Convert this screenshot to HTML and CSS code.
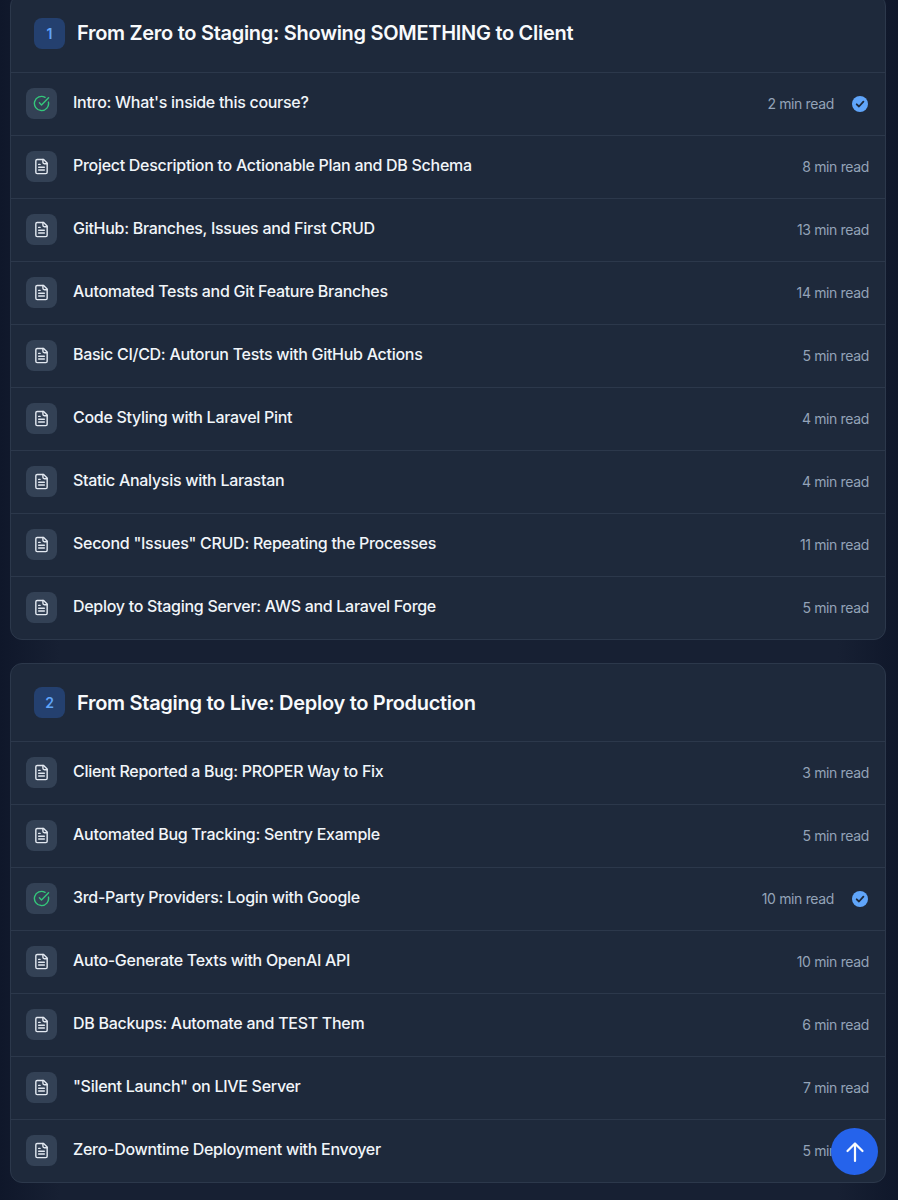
FILE: index.html
```html
<!DOCTYPE html>
<html lang="en">
<head>
<meta charset="utf-8">
<title>Course</title>
<link rel="stylesheet" href="styles.css">
</head>
<body>
<svg class="defs" width="0" height="0" aria-hidden="true">
  <symbol id="doc" viewBox="0 0 24 24" fill="none" stroke="currentColor" stroke-width="2" stroke-linecap="round" stroke-linejoin="round">
    <path d="M15 2H6a2 2 0 0 0-2 2v16a2 2 0 0 0 2 2h12a2 2 0 0 0 2-2V7Z"/>
    <path d="M14 2v4a2 2 0 0 0 2 2h4"/>
    <path d="M10 9H8M16 13H8M16 17H8"/>
  </symbol>
  <symbol id="done" viewBox="0 0 24 24" fill="none" stroke="currentColor" stroke-width="2" stroke-linecap="round" stroke-linejoin="round">
    <path d="M21.8 10A10 10 0 1 1 17 3.34"/>
    <path d="m9 11 3 3L22 4"/>
  </symbol>
  <symbol id="badge" viewBox="0 0 16 16">
    <circle cx="8" cy="8" r="8" fill="#60a5fa"/>
    <path d="M4.7 8.3 7 10.5l4.4-4.8" fill="none" stroke="#1e293b" stroke-width="1.8" stroke-linecap="round" stroke-linejoin="round"/>
  </symbol>
</svg>
<main class="page">
  <section class="card">
    <header class="card-head"><span class="num">1</span><h2>From Zero to Staging: Showing SOMETHING to Client</h2></header>
    <div class="row"><span class="ico ok"><svg><use href="#done"/></svg></span><span class="name">Intro: What's inside this course?</span><span class="time">2 min read</span><svg class="tick"><use href="#badge"/></svg></div>
    <div class="row"><span class="ico"><svg><use href="#doc"/></svg></span><span class="name">Project Description to Actionable Plan and DB Schema</span><span class="time">8 min read</span></div>
    <div class="row"><span class="ico"><svg><use href="#doc"/></svg></span><span class="name">GitHub: Branches, Issues and First CRUD</span><span class="time">13 min read</span></div>
    <div class="row"><span class="ico"><svg><use href="#doc"/></svg></span><span class="name">Automated Tests and Git Feature Branches</span><span class="time">14 min read</span></div>
    <div class="row"><span class="ico"><svg><use href="#doc"/></svg></span><span class="name">Basic CI/CD: Autorun Tests with GitHub Actions</span><span class="time">5 min read</span></div>
    <div class="row"><span class="ico"><svg><use href="#doc"/></svg></span><span class="name">Code Styling with Laravel Pint</span><span class="time">4 min read</span></div>
    <div class="row"><span class="ico"><svg><use href="#doc"/></svg></span><span class="name">Static Analysis with Larastan</span><span class="time">4 min read</span></div>
    <div class="row"><span class="ico"><svg><use href="#doc"/></svg></span><span class="name">Second "Issues" CRUD: Repeating the Processes</span><span class="time">11 min read</span></div>
    <div class="row"><span class="ico"><svg><use href="#doc"/></svg></span><span class="name">Deploy to Staging Server: AWS and Laravel Forge</span><span class="time">5 min read</span></div>
  </section>
  <section class="card">
    <header class="card-head"><span class="num">2</span><h2>From Staging to Live: Deploy to Production</h2></header>
    <div class="row"><span class="ico"><svg><use href="#doc"/></svg></span><span class="name">Client Reported a Bug: PROPER Way to Fix</span><span class="time">3 min read</span></div>
    <div class="row"><span class="ico"><svg><use href="#doc"/></svg></span><span class="name">Automated Bug Tracking: Sentry Example</span><span class="time">5 min read</span></div>
    <div class="row"><span class="ico ok"><svg><use href="#done"/></svg></span><span class="name">3rd-Party Providers: Login with Google</span><span class="time">10 min read</span><svg class="tick"><use href="#badge"/></svg></div>
    <div class="row"><span class="ico"><svg><use href="#doc"/></svg></span><span class="name">Auto-Generate Texts with OpenAI API</span><span class="time">10 min read</span></div>
    <div class="row"><span class="ico"><svg><use href="#doc"/></svg></span><span class="name">DB Backups: Automate and TEST Them</span><span class="time">6 min read</span></div>
    <div class="row"><span class="ico"><svg><use href="#doc"/></svg></span><span class="name">"Silent Launch" on LIVE Server</span><span class="time">7 min read</span></div>
    <div class="row"><span class="ico"><svg><use href="#doc"/></svg></span><span class="name">Zero-Downtime Deployment with Envoyer</span><span class="time">5 min read</span></div>
  </section>
</main>
<a class="fab" href="#top" aria-label="Back to top">
  <svg viewBox="0 0 24 24" fill="none" stroke="currentColor" stroke-width="2.2" stroke-linecap="round" stroke-linejoin="round"><path d="M12 21V3.5M4.5 11 12 3.5l7.5 7.5"/></svg>
</a>
</body>
</html>
```
FILE: styles.css
```css
* { box-sizing: border-box; }
html, body { margin: 0; height: 1200px; overflow: hidden; }
body {
  background: linear-gradient(90deg, #0f172a 0, #172033 60px, #172033 838px, #0f172a 100%);
  font-family: Inter, "Liberation Sans", sans-serif;
  color: #f1f5f9;
}
.defs { display: block; height: 0; }
.page {
  display: flex;
  flex-direction: column;
  gap: 23px;
  padding: 0 12px 0 10px;
  margin-top: -6.4px;
}
.card {
  background: #1e293b;
  border: 1px solid #2c384b;
  border-radius: 12px;
  overflow: hidden;
}
.card-head {
  display: flex;
  align-items: center;
  gap: 12px;
  height: 77.4px;
  padding: 0 23px;
}
.num {
  width: 31px;
  height: 31px;
  border-radius: 8px;
  background: #24406f;
  color: #60a5fa;
  font-size: 14px;
  font-weight: 600;
  display: flex;
  align-items: center;
  justify-content: center;
}
h2 {
  margin: 0;
  font-size: 20px;
  line-height: 28px;
  font-weight: 600;
  letter-spacing: -0.29px;
  color: #f8fafc;
}
.row {
  display: flex;
  align-items: center;
  height: 63px;
  padding: 0 16px 0 15px;
  border-top: 1px solid #2c384b;
}
.ico {
  width: 31px;
  height: 31px;
  margin-bottom: 2px;
  border-radius: 8px;
  background: #334155;
  color: #e2e8f0;
  display: flex;
  align-items: center;
  justify-content: center;
  flex: none;
}
.ico svg { width: 17px; height: 17px; }
.ico.ok { color: #34c77b; }
.name {
  flex: 1;
  margin-left: 16px;
  font-size: 16px;
  line-height: 24px;
  font-weight: 500;
  letter-spacing: -0.29px;
  color: #f1f5f9;
  position: relative;
  top: -2px;
}
.time {
  font-size: 14px;
  line-height: 20px;
  letter-spacing: -0.35px;
  color: #94a3b8;
}
.tick {
  width: 16px;
  height: 16px;
  margin-left: 18px;
  margin-right: 1px;
  flex: none;
}
.fab {
  position: fixed;
  left: 831px;
  top: 1128px;
  width: 47px;
  height: 47px;
  border-radius: 50%;
  background: #2563eb;
  color: #f8fafc;
  display: flex;
  align-items: center;
  justify-content: center;
}
.fab svg { width: 24px; height: 24px; }
```
